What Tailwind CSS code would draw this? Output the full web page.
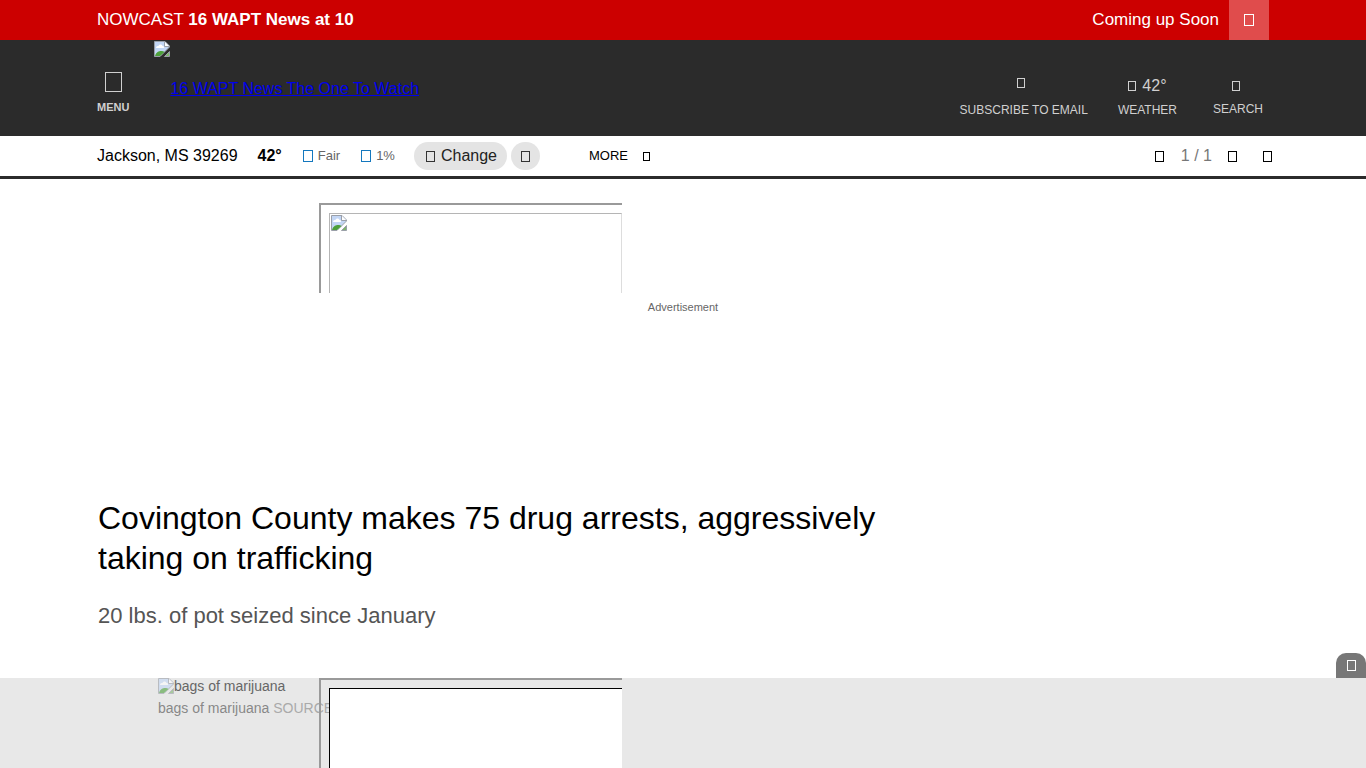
<!DOCTYPE html>
<html lang="en">
<head>
<meta charset="utf-8">
<title>Covington County makes 75 drug arrests, aggressively taking on trafficking</title>
<script src="https://cdn.jsdelivr.net/npm/@tailwindcss/browser@4"></script>
</head>
<body class="flex min-h-screen flex-col overflow-x-hidden bg-white font-['Liberation_Sans',Arial,sans-serif] text-base text-black">
<svg class="hidden" aria-hidden="true">
  <symbol id="broken" viewBox="0 0 16 16">
    <path d="M.5 15.500V.5H11L15.500 5V6L6 15.500Z" fill="#c3d6f5" stroke="#9a9fa8"/>
    <path d="M11 1V5H15Z" fill="#fff"/>
    <path d="M10.500.5V5.500H15.500" fill="none" stroke="#9a9fa8"/>
    <path d="M2 7c0-2 2-2 2.500-2C5 3 8 3 8.500 5c2 0 2 2 1 2z" fill="#fff"/>
    <path d="M1 15c1-4 4-5 6-5 1.500 0 2.500 0 3.500 1L6 15z" fill="#4da03a"/>
    <path d="M10.500 15.500H15.500V10.500Z" fill="#7db56c" stroke="#9a9fa8"/>
  </symbol>
</svg>

<div class="bg-[#cc0000] text-white">
  <div class="mx-auto flex h-10 max-w-[1172px] items-center justify-between text-[17px]">
    <p>NOWCAST <b>16 WAPT News at 10</b></p>
    <div class="flex h-full items-center gap-[10px]">
      <span>Coming up Soon</span>
      <button type="button" aria-label="Close" class="flex h-full w-10 items-center justify-center bg-[#e04c4c]"><span class="h-3 w-[10px] border border-white"></span></button>
    </div>
  </div>
</div>

<header class="bg-[#2b2b2b] text-[#d0d0d0]">
  <div class="mx-auto flex h-24 max-w-[1172px] items-start">
    <button type="button" class="mt-8 flex flex-col items-center gap-2 text-[11px] leading-[14px] font-bold"><span class="h-5 w-[17px] border border-[#d0d0d0]"></span>MENU</button>
    <a href="#" class="ml-[25px] flex h-full items-start text-[#0000ee] underline">
      <svg class="mt-px size-4"><use href="#broken"/></svg>
      <span class="mt-[37px]">16 WAPT News The One To Watch</span>
    </a>
    <nav class="mr-[6px] ml-auto flex text-[12px] leading-4">
      <a href="#" class="mt-[38px] flex flex-col items-center gap-[14px]"><span class="ml-[-5px] h-[10px] w-2 border border-[#d0d0d0]"></span>SUBSCRIBE TO EMAIL</a>
      <a href="#" class="mt-9 ml-[30px] flex flex-col items-center gap-[6px]"><span class="flex items-center gap-[6px] text-base leading-5"><span class="h-[10px] w-2 border border-[#d0d0d0]"></span>42°</span>WEATHER</a>
      <button type="button" class="mt-[41px] ml-9 flex flex-col items-center gap-[10px]"><span class="ml-[-4px] h-[10px] w-2 border border-[#d0d0d0]"></span>SEARCH</button>
    </nav>
  </div>
</header>

<div class="border-b-[3px] border-[#2b2b2b]">
  <div class="mx-auto flex h-10 max-w-[1172px] items-center">
    <span>Jackson, MS 39269</span>
    <b class="ml-5">42°</b>
    <span class="ml-[21px] flex items-center gap-[5px] text-[13px] text-[#666]"><span class="h-3 w-[10px] border border-[#1478be]"></span>Fair</span>
    <span class="ml-[21px] flex items-center gap-[5px] text-[13px] text-[#666]"><span class="h-3 w-[10px] border border-[#1478be]"></span>1%</span>
    <button type="button" class="ml-[19px] flex h-7 items-center gap-[6px] rounded-full bg-[#e4e4e4] pr-[10px] pl-3 text-[#222]"><span class="h-[11px] w-[9px] border border-[#333]"></span>Change</button>
    <button type="button" aria-label="Locate" class="ml-1 flex h-7 w-[29px] items-center justify-center rounded-full bg-[#e4e4e4]"><span class="h-[11px] w-[9px] border border-[#333]"></span></button>
    <button type="button" class="ml-[49px] flex items-center gap-[15px] text-[13px]">MORE<span class="h-[9px] w-[7px] border border-black"></span></button>
    <div class="mr-[-3px] ml-auto flex items-center text-[#777]">
      <button type="button" aria-label="Previous" class="h-[11px] w-[9px] border border-black"></button>
      <span class="ml-[17px]">1 / 1</span>
      <button type="button" aria-label="Next" class="ml-4 h-[11px] w-[9px] border border-black"></button>
      <button type="button" aria-label="Close alerts" class="ml-[26px] h-[11px] w-[9px] border border-black"></button>
    </div>
  </div>
</div>

<aside class="mx-auto mt-6 w-full max-w-[728px]">
  <div class="h-[90px] w-[303px] border-t-2 border-l-2 border-[#9a9a9a] pt-2 pl-2">
    <div class="h-full border-t border-r border-l border-t-[#b5b5b5] border-r-[#ddd] border-l-[#b5b5b5] pt-px pl-px"><svg class="size-4"><use href="#broken"/></svg></div>
  </div>
  <p class="mt-[7px] text-center text-[11px] leading-[14px] text-[#666]">Advertisement</p>
</aside>

<main class="flex grow flex-col">
  <div class="mx-auto mt-[184px] w-full max-w-[1170px]">
    <h1 class="max-w-[800px] text-[32px] leading-10">Covington County makes 75 drug arrests, aggressively taking on trafficking</h1>
    <p class="mt-[22px] mb-[46px] text-[22px] leading-8 text-[#555]">20 lbs. of pot seized since January</p>
  </div>
  <section class="relative min-h-[90px] grow bg-[#e8e8e8]">
    <figure class="mx-auto max-w-[1050px] text-[14px]">
      <div class="flex items-start leading-4 text-[#666]"><svg class="size-4 opacity-60"><use href="#broken"/></svg>bags of marijuana</div>
      <figcaption class="mt-1 leading-5 text-[#888]">bags of marijuana <span class="text-[#aaa]">SOURCE</span></figcaption>
    </figure>
    <div class="absolute inset-y-0 left-1/2 -ml-[364px] w-[303px] border-t-2 border-l-2 border-[#9a9a9a] pt-2 pl-2">
      <div class="h-full border-t border-l border-black bg-white"></div>
    </div>
    <button type="button" aria-label="Expand" class="absolute right-0 bottom-full flex h-[25px] w-[30px] items-center justify-center rounded-t-[10px] bg-[#777]"><span class="h-[11px] w-[9px] border border-white"></span></button>
  </section>
</main>
</body>
</html>
